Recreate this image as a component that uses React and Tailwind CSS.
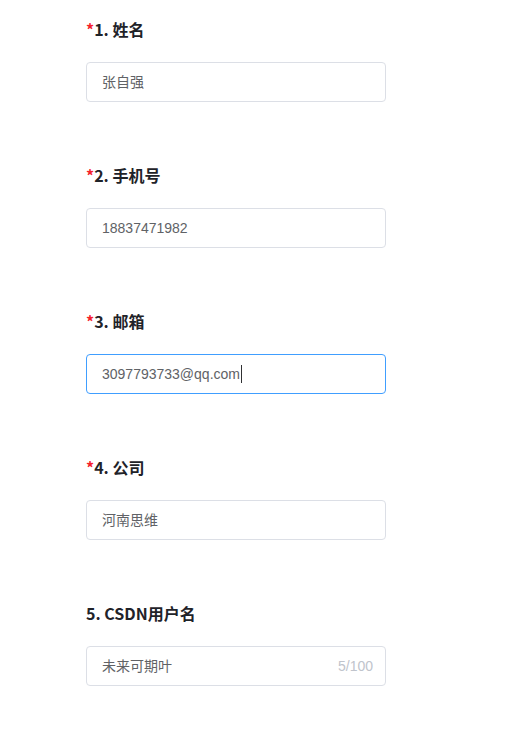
export default function App() {
  const fields = [
    { label: "1. 姓名", value: "张自强", req: true },
    { label: "2. 手机号", value: "18837471982", req: true },
    { label: "3. 邮箱", value: "3097793733@qq.com", req: true, focus: true },
    { label: "4. 公司", value: "河南思维", req: true },
    { label: "5. CSDN用户名", value: "未来可期叶", req: false, count: "5/100" },
  ];
  return (
    <div className="w-[528px] h-[729px] bg-white pl-[86px] pt-[17px]">
      {fields.map((f, i) => (
        <div key={i} className="mb-[61px] w-[300px]">
          <div className="h-[24px] leading-[24px] text-[16px] font-bold text-[#1f2329] [font-family:'Noto_Sans_CJK_SC',sans-serif] flex items-center">
            {f.req && <span className="text-[#f5222d]">*</span>}
            <span>{f.label}</span>
          </div>
          <div
            className={`mt-[21px] h-[40px] w-[300px] rounded-[4px] border flex items-center pl-[15px] pr-[12px] text-[14px] text-[#606266] [font-family:'Liberation_Sans','Noto_Sans_CJK_SC',sans-serif] ${
              f.focus ? "border-[#409eff]" : "border-[#dcdfe6]"
            }`}
          >
            <span className="flex-1 flex items-center">
              {f.value}
              {f.focus && <span className="inline-block w-[1px] h-[18px] bg-[#303133] ml-[1px]" />}
            </span>
            {f.count && <span className="text-[14px] text-[#c0c4cc]">{f.count}</span>}
          </div>
        </div>
      ))}
    </div>
  );
}
